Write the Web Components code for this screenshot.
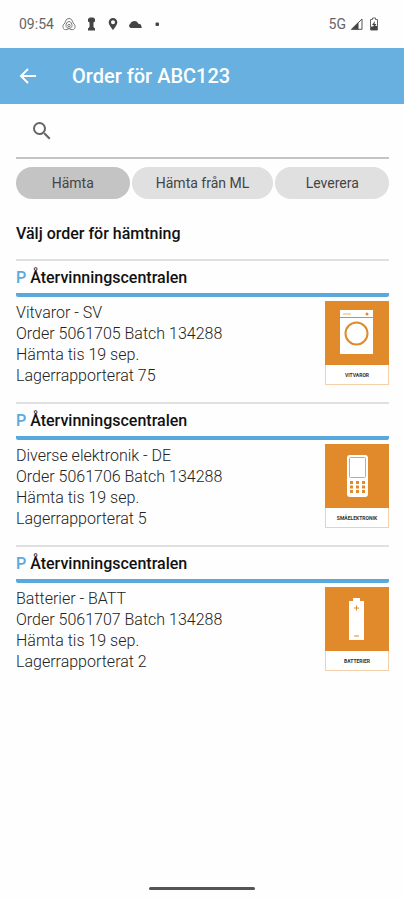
<!DOCTYPE html>
<html lang="sv">
<head>
<meta charset="utf-8">
<meta name="viewport" content="width=device-width, initial-scale=1">
<title>Order för ABC123</title>
<style>
body {
    margin: 0;
    background: #fefefe;
    color: #222;
    font-family: Roboto, "Liberation Sans", sans-serif;
    font-size: 16px;
}
</style>
</head>
<body>
<order-app></order-app>

<script>
class StatusBar extends HTMLElement {

    body = `
        <style>
        :host{
            display: flex;
            align-items: center;
            justify-content: space-between;
            height: 48px;
            padding: 0 24px 0 19px;
            box-sizing: border-box;
            color: #666;
            font-size: 14px;
        }
        div{
            display: flex;
            align-items: center;
            gap: 8px;
        }
        .right{
            gap: 4px;
        }
        svg{
            display: block;
            fill: #444;
        }
        </style>
        <div>
            <span>09:54</span>
            <svg width="14" height="14" viewBox="0 0 14 14"><g fill="none" stroke="#777" stroke-width="1"><path d="M7 1.500C4 1.500 3.500 4 3 6C1 7.500 .8 9 1 10.500C1.300 12.500 3.500 13 5 12.500L7 11.500L9 12.500C10.500 13 12.700 12.500 13 10.500C13.200 9 13 7.500 11 6C10.500 4 10 1.500 7 1.500Z"/><path d="M7 4.500C5 4.500 4 7 4 8.500C4 10.500 5.500 11.300 7 11.300S10 10.500 10 8.500C10 7 9 4.500 7 4.500Z"/><circle cx="7" cy="8.500" r="1.200"/></g></svg>
            <svg width="14" height="14" viewBox="0 0 14 14"><path d="M5.500 .5h4l.5 1h1V4.500L9.500 5.500v4.500l1.500 1.500v2H4v-2l1.500-1.500V5.500L4 4.500V1.500H5z"/></svg>
            <svg width="14" height="14" viewBox="0 0 14 14"><path fill-rule="evenodd" d="M7 1a4.300 4.300 0 0 0-4.300 4.300C2.700 8.300 7 13 7 13s4.300-4.700 4.300-7.700A4.300 4.300 0 0 0 7 1zm0 2.300a2 2 0 1 1 0 4 2 2 0 0 1 0-4z"/></svg>
            <svg width="14" height="14" viewBox="0 0 14 14"><path d="M2.800 11A2.300 2.300 0 0 1 2.300 6.700C3 5 4.700 4 6.500 4C8.500 4 9.800 5.200 10.300 6.800C12.300 6.600 13.700 8 13.700 11z"/></svg>
            <svg width="14" height="14" viewBox="0 0 14 14"><rect x="5.500" y="5.500" width="3.500" height="3.500" rx="1"/></svg>
        </div>
        <div class="right">
            <span>5G</span>
            <svg width="14" height="14" viewBox="0 0 14 14"><path d="M1 12.500 8.500 5v7.500z"/><path d="M1.500 12.300 12 2v10.300z" fill="none" stroke="#555"/></svg>
            <svg width="12" height="14" viewBox="0 0 12 14"><path d="M4.500 1h3v1.500H9.500v10.500h-7V2.500h2z" fill="none" stroke="#666"/><path d="M7 4 4 8h2l-1 1.500H3V13h6V9H7l1.500-2H6.500z"/></svg>
        </div>
    `
    constructor() {
        super()
        this.attachShadow({ mode: 'open' })
        this.shadowRoot.innerHTML = this.body;
    }
}
customElements.define("status-bar", StatusBar)

class AppHeader extends HTMLElement {

    body = `
        <style>
        :host{
            display: flex;
            align-items: center;
            gap: 32px;
            height: 56px;
            padding: 0 16px;
            box-sizing: border-box;
            background: #68b0e0;
            color: #fff;
        }
        button{
            padding: 0;
            border: 0;
            background: none;
            color: inherit;
        }
        svg{
            display: block;
        }
        h1{
            margin: 0;
            font-size: 20px;
            font-weight: 500;
        }
        </style>
        <button type="button" aria-label="Tillbaka">
            <svg width="24" height="24" viewBox="0 0 24 24"><path d="M20 12H6M12 5 5 12l7 7" fill="none" stroke="#fff" stroke-width="2"/></svg>
        </button>
        <h1><slot></slot></h1>
    `
    constructor() {
        super()
        this.attachShadow({ mode: 'open' })
        this.shadowRoot.innerHTML = this.body;
    }
}
customElements.define("app-header", AppHeader)

class SearchField extends HTMLElement {

    body = `
        <style>
        :host{
            display: block;
        }
        label{
            display: flex;
            align-items: center;
            gap: 12px;
            height: 55px;
            padding-left: 14px;
            border-bottom: 2px solid #c4c4c4;
            box-sizing: border-box;
        }
        svg{
            flex: none;
        }
        input{
            flex: 1;
            min-width: 0;
            height: 40px;
            border: 0;
            outline: 0;
            padding: 0;
            background: none;
            font: inherit;
        }
        </style>
        <label>
            <svg width="24" height="24" viewBox="0 0 24 24"><path fill="#666" d="M15.500 14h-.79l-.28-.27A6.470 6.470 0 0 0 16 9.500 6.500 6.500 0 1 0 9.500 16c1.610 0 3.090-.59 4.230-1.570l.27.28v.79l5 4.990L20.490 19zm-6 0a4.500 4.500 0 1 1 0-9 4.500 4.500 0 0 1 0 9z"/></svg>
            <input type="text" aria-label="Sök">
        </label>
    `
    constructor() {
        super()
        this.attachShadow({ mode: 'open' })
        this.shadowRoot.innerHTML = this.body;
    }
}
customElements.define("search-field", SearchField)

class FilterPill extends HTMLElement {

    body = `
        <style>
        :host{
            display: block;
            flex: 4;
        }
        :host([wide]){
            flex: 5;
        }
        button{
            display: block;
            width: 100%;
            height: 32px;
            padding: 0;
            border: 0;
            border-radius: 16px;
            background: #e0e0e0;
            color: #444;
            font: inherit;
            font-size: 14px;
            white-space: nowrap;
        }
        :host([selected]) button{
            background: #c4c4c4;
        }
        </style>
        <button type="button"><slot></slot></button>
    `
    constructor() {
        super()
        this.attachShadow({ mode: 'open' })
        this.shadowRoot.innerHTML = this.body;
    }
    connectedCallback() {
        const button = this.shadowRoot.querySelector('button');
        button.setAttribute('aria-pressed', this.hasAttribute('selected'))
        button.addEventListener('click', this._select.bind(this))
    }

    _select() {
        for (const pill of this.parentNode.querySelectorAll('filter-pill')) {
            pill.toggleAttribute('selected', pill === this)
            pill.shadowRoot.querySelector('button').setAttribute('aria-pressed', pill === this)
        }
    }
}
customElements.define("filter-pill", FilterPill)

const pictures = {
    washer: `
        <rect x="15" y="9" width="33" height="44" fill="#fff"/>
        <path d="M15 16.500h33" stroke="#e08a2c"/>
        <path d="M18 13h8" stroke="#e9ad70"/>
        <circle cx="42" cy="13" r="1.500" fill="#e08a2c"/>
        <circle cx="31.500" cy="32.500" r="11" fill="none" stroke="#e08a2c" stroke-width="2"/>`,
    phone: `
        <rect x="22" y="11" width="21" height="42" rx="3" fill="#fff"/>
        <rect x="24.500" y="13.500" width="16" height="20" rx="1" fill="none" stroke="#e6a15a"/>
        <path d="M25 38.500h15M25 43h15M25 47.500h15" stroke="#e08a2c" stroke-width="3" stroke-dasharray="3 3"/>`,
    battery: `
        <path d="M28 11h7v3h4v39H24V14h4z" fill="#fff"/>
        <path d="M29 21h5M31.500 18.500v5M29 49h5" stroke="#e08a2c"/>`
}

class WasteLabel extends HTMLElement {

    constructor() {
        super()
        this.attachShadow({ mode: 'open' })
    }
    connectedCallback() {
        this.shadowRoot.innerHTML = `
            <style>
            :host{
                display: block;
                flex: none;
                width: 64px;
                height: 84px;
                box-sizing: border-box;
                border: 1px solid #f3cfaa;
                background: #fff;
                color: #333;
                font-size: 5px;
                font-weight: 700;
                line-height: 20px;
                text-align: center;
            }
            svg{
                display: block;
                width: 64px;
                height: 64px;
                margin: -1px -1px 0;
                background: #e08a2c;
            }
            </style>
            <svg viewBox="0 0 64 64" aria-hidden="true">${pictures[this.getAttribute('picture')]}</svg>
            <slot></slot>
        `;
    }
}
customElements.define("waste-label", WasteLabel)

class OrderCard extends HTMLElement {

    body = `
        <style>
        :host{
            display: block;
            padding-bottom: 16px;
            border-top: 2px solid #e0e0e0;
        }
        h3{
            margin: 0;
            padding-top: 2px;
            border-bottom: 4px solid #5aa9dc;
            border-radius: 2px;
            font-size: 16px;
            font-weight: 500;
            line-height: 30px;
            color: #111;
        }
        b{
            font-weight: 500;
            color: #5aa9dc;
        }
        .row{
            display: flex;
            align-items: flex-start;
            justify-content: space-between;
            padding-top: 4px;
        }
        .text{
            padding-top: 1px;
            line-height: 21px;
            font-weight: 300;
        }
        </style>
        <h3><b>P</b> <span></span></h3>
        <div class="row">
            <div class="text"><slot></slot></div>
            <slot name="picture"></slot>
        </div>
    `
    constructor() {
        super()
        this.attachShadow({ mode: 'open' })
        this.shadowRoot.innerHTML = this.body;
    }
    connectedCallback() {
        this.shadowRoot.querySelector('span').innerText = this.getAttribute('place')
    }
}
customElements.define("order-card", OrderCard)

class OrderApp extends HTMLElement {

    body = `
        <style>
        :host{
            display: flex;
            flex-direction: column;
            min-height: 100vh;
        }
        main{
            flex: 1;
            padding: 0 15px 0 16px;
        }
        nav{
            display: flex;
            gap: 2px;
            padding-top: 8px;
        }
        h2{
            margin: 0;
            padding: 24px 0 14px;
            font-size: 16px;
            font-weight: 500;
            line-height: 22px;
            color: #111;
        }
        footer{
            display: flex;
            justify-content: center;
            padding-bottom: 10px;
        }
        .handle{
            width: 106px;
            height: 3px;
            border-radius: 2px;
            background: #555;
        }
        </style>
        <status-bar></status-bar>
        <app-header>Order för ABC123</app-header>
        <main>
            <search-field></search-field>
            <nav>
                <filter-pill selected>Hämta</filter-pill>
                <filter-pill wide>Hämta från ML</filter-pill>
                <filter-pill>Leverera</filter-pill>
            </nav>
            <h2>Välj order för hämtning</h2>
            <order-card place="Återvinningscentralen">
                <div>Vitvaror - SV</div>
                <div>Order 5061705 Batch 134288</div>
                <div>Hämta tis 19 sep.</div>
                <div>Lagerrapporterat 75</div>
                <waste-label slot="picture" picture="washer">VITVAROR</waste-label>
            </order-card>
            <order-card place="Återvinningscentralen">
                <div>Diverse elektronik - DE</div>
                <div>Order 5061706 Batch 134288</div>
                <div>Hämta tis 19 sep.</div>
                <div>Lagerrapporterat 5</div>
                <waste-label slot="picture" picture="phone">SMÅELEKTRONIK</waste-label>
            </order-card>
            <order-card place="Återvinningscentralen">
                <div>Batterier - BATT</div>
                <div>Order 5061707 Batch 134288</div>
                <div>Hämta tis 19 sep.</div>
                <div>Lagerrapporterat 2</div>
                <waste-label slot="picture" picture="battery">BATTERIER</waste-label>
            </order-card>
        </main>
        <footer><div class="handle"></div></footer>
    `
    constructor() {
        super()
        this.attachShadow({ mode: 'open' })
        this.shadowRoot.innerHTML = this.body;
    }
}
customElements.define("order-app", OrderApp)
</script>
</body>
</html>
